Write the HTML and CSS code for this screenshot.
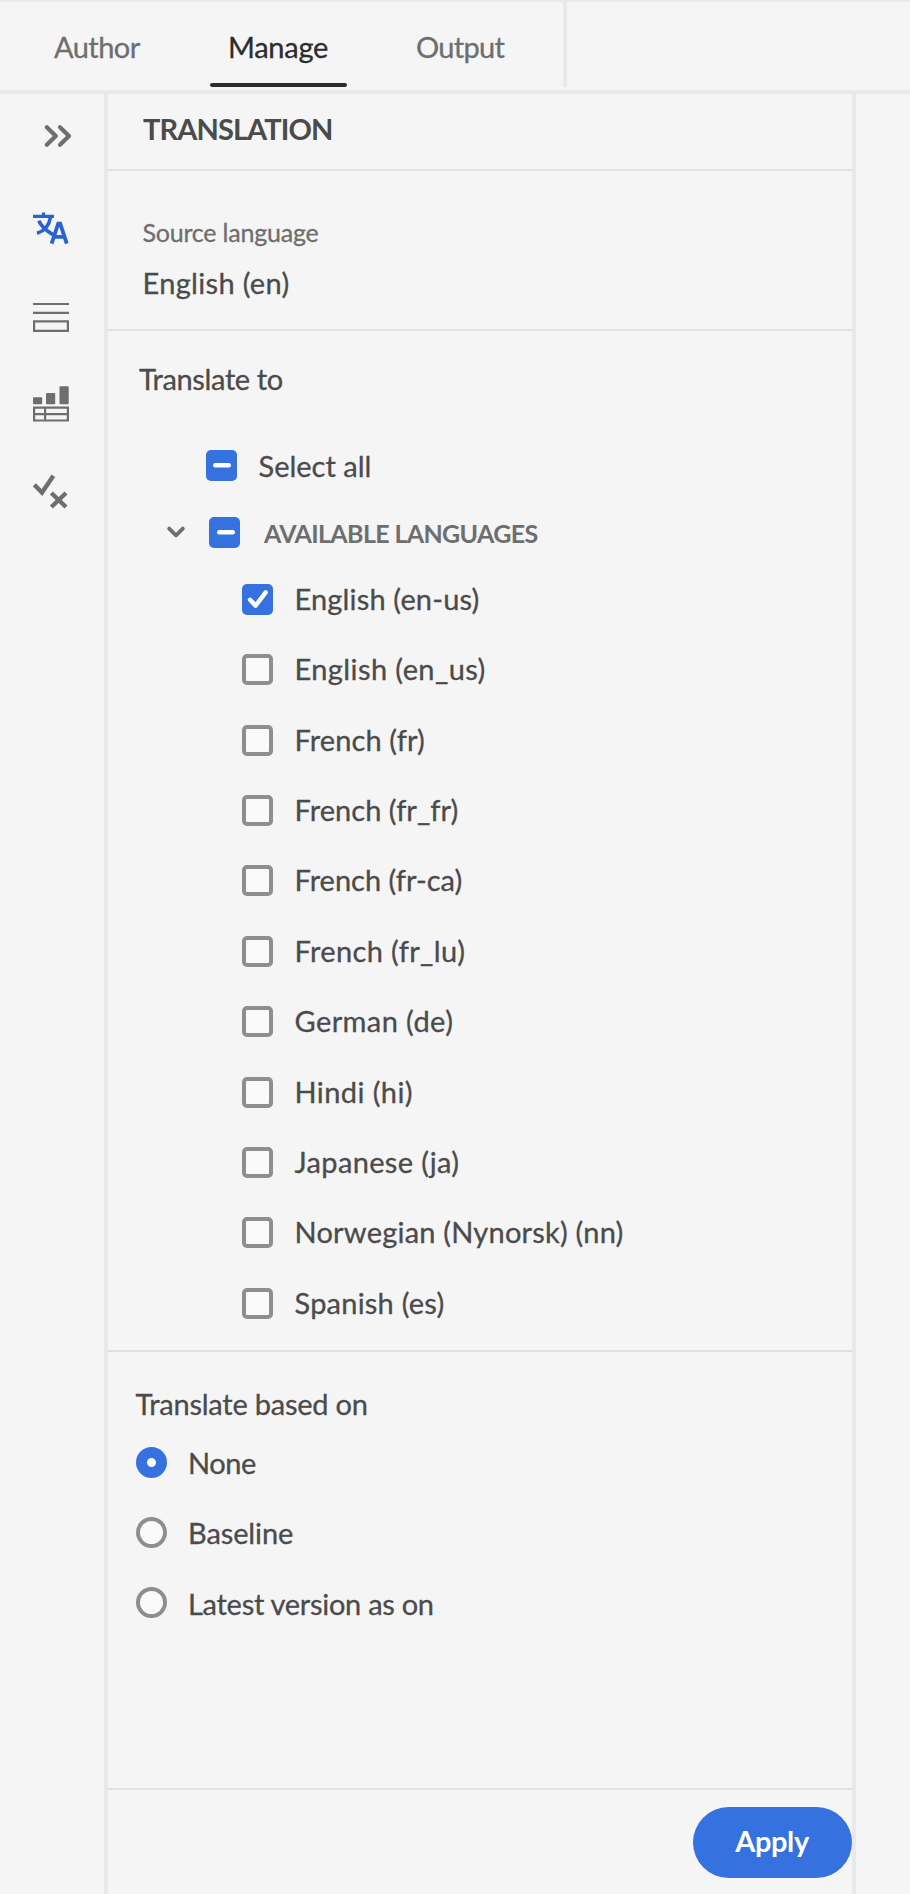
FILE: index.html
```html
<!DOCTYPE html>
<html lang="en">
<head>
<meta charset="utf-8">
<title>Translation</title>
<link rel="stylesheet" href="styles.css">
</head>
<body>
<div class="app">
  <nav class="topbar">
    <div class="tabs">
      <a class="tab tab-author">Author</a>
      <a class="tab tab-manage">Manage</a>
      <a class="tab tab-output">Output</a>
    </div>
  </nav>
  <div class="main">
    <aside class="rail">
      <svg class="rail-icon" width="104" height="380" viewBox="0 94 104 380" fill="none">
        <g stroke="#6e6e6e" stroke-width="4.2" stroke-linecap="round" stroke-linejoin="round">
          <path d="M46.8 127.2 55.8 136 46.8 144.8M60 127.2 69 136 60 144.8"/>
        </g>
        <g stroke="#2a62d0">
          <path d="M33 216.3H54M43.5 212.6V216.5" stroke-width="3.2"/>
          <path d="M50.4 217.5C49.2 225 44.5 231 37 233.3M38.8 220.7C41 226 46 230.5 53 234.6" stroke-width="3.6"/>
          <path d="M51.6 243.7 58.2 223.6H60.2L66.8 243.7M54 236.8H64.8" stroke-width="3.8"/>
        </g>
        <g stroke="#6e6e6e" stroke-width="2.2">
          <path d="M33 304H69M33 312.8H69M34.1 321.3H67.9V330.9H34.1Z"/>
          <path d="M34.1 407.7H67.9V420.5H34.1ZM34 414.2H68M45.1 407V421"/>
        </g>
        <g fill="#6e6e6e">
          <rect x="33" y="397.2" width="9.2" height="7" rx="1"/>
          <rect x="46" y="393" width="9.2" height="11.2" rx="1"/>
          <rect x="59.5" y="386.2" width="9.2" height="18" rx="1"/>
        </g>
      </svg>
      <svg class="rail-icon" width="104" height="40" viewBox="0 474 104 40" fill="none" stroke="#6e6e6e" stroke-width="4.4">
        <path d="M34.3 484.8 42 492.6 53.4 475.8M51.4 493 66 507M66 493 51.4 507"/>
      </svg>
    </aside>
    <main class="panel">
      <h1 class="panel-title">TRANSLATION</h1>
      <section class="source">
        <div class="source-label">Source language</div>
        <div class="source-value">English (en)</div>
      </section>
      <section class="targets">
        <h2 class="targets-heading">Translate to</h2>
        <div class="row row-all">
          <span class="box on"><svg width="31" height="31"><path d="M9.2 15.2H22.8" class="mark"/></svg></span>
          <span class="text ls-all">Select all</span>
        </div>
        <div class="row row-group">
          <svg class="caret" width="20" height="14" viewBox="0 0 20 14"><path d="M3.2 3.6 10 10.4 16.8 3.6"/></svg>
          <span class="box on"><svg width="31" height="31"><path d="M10.2 15.2H23.8" class="mark"/></svg></span>
          <span class="group-label">AVAILABLE LANGUAGES</span>
        </div>
        <div class="row lang"><span class="box on"><svg width="31" height="31"><path d="M8 15.8 13.6 21.6 23.7 8.4" class="mark"/></svg></span><span class="text ls-en-us">English (en-us)</span></div>
        <div class="row lang"><span class="box"></span><span class="text ls-wide">English (en_us)</span></div>
        <div class="row lang"><span class="box"></span><span class="text ls-fr">French (fr)</span></div>
        <div class="row lang"><span class="box"></span><span class="text ls-frfr">French (fr_fr)</span></div>
        <div class="row lang"><span class="box"></span><span class="text">French (fr-ca)</span></div>
        <div class="row lang"><span class="box"></span><span class="text ls-lu">French (fr_lu)</span></div>
        <div class="row lang"><span class="box"></span><span class="text ls-wide">German (de)</span></div>
        <div class="row lang"><span class="box"></span><span class="text ls-wide">Hindi (hi)</span></div>
        <div class="row lang"><span class="box"></span><span class="text ls-lu">Japanese (ja)</span></div>
        <div class="row lang"><span class="box"></span><span class="text ls-nn">Norwegian (Nynorsk) (nn)</span></div>
        <div class="row lang"><span class="box"></span><span class="text ls-nn">Spanish (es)</span></div>
      </section>
      <section class="basis">
        <h2 class="basis-heading">Translate based on</h2>
        <div class="row option"><span class="radio picked"></span><span class="text ls-none">None</span></div>
        <div class="row option"><span class="radio"></span><span class="text ls-base">Baseline</span></div>
        <div class="row option"><span class="radio"></span><span class="text ls-latest">Latest version as on</span></div>
      </section>
      <footer class="footer"><button class="apply">Apply</button></footer>
    </main>
  </div>
</div>
</body>
</html>
```
FILE: styles.css
```css
* { box-sizing: border-box; }

body {
  margin: 0;
  background: #f5f5f5;
  color: #4b4b4b;
  font: 400 29px/40px Lato, "Open Sans", sans-serif;
  white-space: nowrap;
}

h1, h2 { margin: 0; font-size: 29px; font-weight: 400; }

.app { width: 910px; height: 1894px; display: flex; flex-direction: column; overflow: hidden; }

.text, .tab, .source-label, .source-value, .targets-heading, .basis-heading {
  -webkit-text-stroke: 0.3px currentColor;
}

/* Top navigation */
.topbar { height: 94px; border-top: 2px solid #e9e9e9; border-bottom: 4px solid #e9e9e9; }
.tabs { display: flex; width: 567px; height: 85px; border-right: 4px solid #e9e9e9; }
.tab { height: 85px; line-height: 90px; color: #6e6e6e; }
.tab-author { width: 210px; padding-left: 54px; letter-spacing: -0.55px; }
.tab-manage { position: relative; width: 137px; padding-left: 18px; color: #2c2c2c; letter-spacing: -0.27px; }
.tab-manage::after {
  content: ""; position: absolute; left: 0; right: 0; bottom: 0;
  height: 4px; border-radius: 2px; background: #2c2c2c;
}
.tab-output { padding-left: 69px; letter-spacing: -0.7px; }

/* Layout columns */
.main { display: flex; flex: 1; }
.rail { width: 108px; border-right: 4px solid #e9e9e9; }
.rail-icon { display: block; }
.panel { width: 748px; border-right: 4px solid #e9e9e9; display: flex; flex-direction: column; }

.panel-title {
  height: 77px; padding: 15px 0 0 35px; border-bottom: 2px solid #e1e1e1;
  font-weight: 700; letter-spacing: -0.9px;
}

.source { height: 160px; padding: 43px 0 0 34.5px; border-bottom: 2px solid #e1e1e1; }
.source-label { font-size: 25px; line-height: 36px; color: #6e6e6e; letter-spacing: -0.21px; }
.source-value { margin-top: 13px; letter-spacing: 0.32px; }

.targets { height: 1021px; padding-top: 28px; border-bottom: 2px solid #e1e1e1; }
.targets-heading { padding-left: 31px; letter-spacing: -0.37px; }

/* Checkbox and radio rows */
.row { display: flex; align-items: center; }
.row-all { margin-top: 32px; height: 69px; padding-left: 98px; }
.row-group { height: 64.2px; padding-left: 58px; }
.lang { height: 70.4px; padding-left: 134px; }
.option { height: 70.4px; padding-left: 28px; }
.text { margin-left: 21.5px; }
.lang .text { margin-bottom: 1px; }

.box { width: 31px; height: 31px; border: 4px solid #8e8e8e; border-radius: 5px; background: #fafafa; }
.box.on { border: 0; background: #3571df; }
.box svg { display: block; }
.mark { fill: none; stroke: #fff; stroke-width: 4.4; stroke-linecap: round; stroke-linejoin: round; }
.caret { margin-right: 23px; fill: none; stroke: #6e6e6e; stroke-width: 3.8; stroke-linecap: round; stroke-linejoin: round; }
.group-label { margin-left: 24px; padding-top: 2px; color: #6e6e6e; font-size: 25px; font-weight: 700; letter-spacing: -0.65px; }

.radio { width: 31px; height: 31px; border: 4px solid #8e8e8e; border-radius: 50%; background: #fafafa; }
.radio.picked { border: 11px solid #3571df; }
.option .text { margin-left: 21px; padding-top: 1.5px; }

.ls-en-us { letter-spacing: 0.16px; }
.ls-wide { letter-spacing: 0.41px; }
.ls-fr { letter-spacing: 0.1px; }
.ls-frfr { letter-spacing: 0.04px; }
.ls-lu { letter-spacing: 0.35px; }
.ls-nn { letter-spacing: 0.22px; }
.ls-none { letter-spacing: -0.44px; }
.ls-base { letter-spacing: -0.11px; }
.ls-latest { letter-spacing: -0.28px; }

.basis { height: 438px; padding-top: 32px; border-bottom: 2px solid #e1e1e1; }
.basis-heading { margin-bottom: 3px; padding-left: 27.5px; letter-spacing: -0.23px; }

.footer { display: flex; justify-content: flex-end; padding-top: 17px; }
.apply {
  width: 159px; height: 71px; padding: 0 1px 4px 0; border: 0; border-radius: 35.5px;
  background: #3571df; color: #fff; font: 700 29px/64px Lato, sans-serif; letter-spacing: -0.4px;
}
```
